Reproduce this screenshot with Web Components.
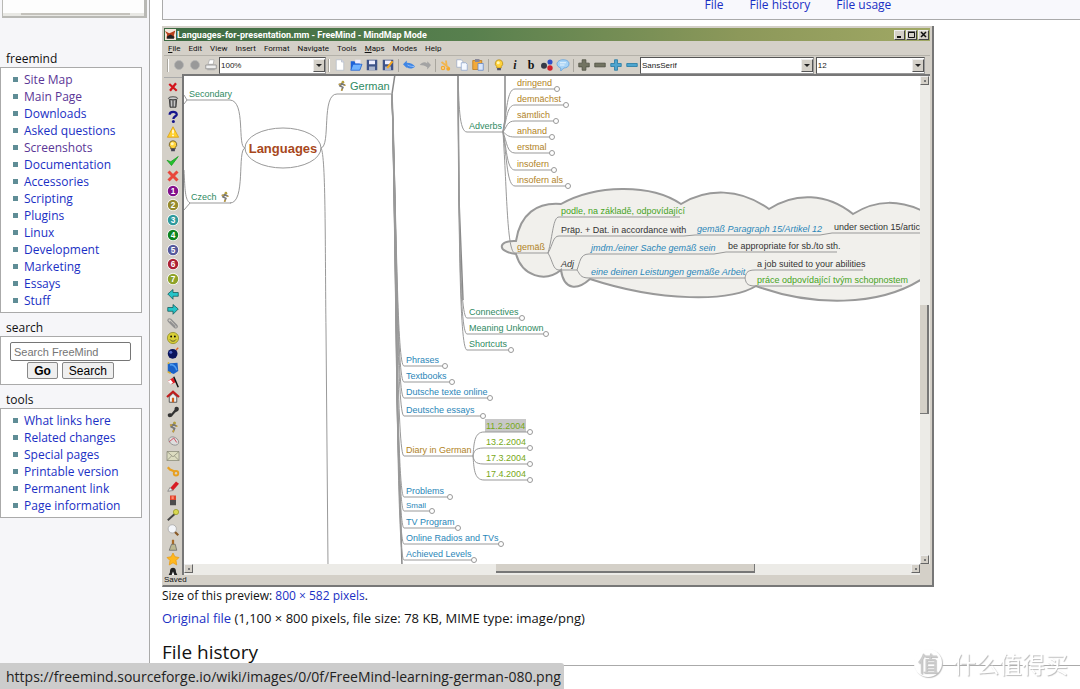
<!DOCTYPE html>
<html lang="en">
<head>
<meta charset="utf-8">
<title>File:FreeMind-learning-german-080.png - FreeMind</title>
<style>
html, body { margin: 0; height: 100%; }
body { font: 12px/17px "Open Sans", "Noto Sans", sans-serif; color: #111; background: #f6f6f9; overflow: hidden; }
</style>
</head>
<body>
<wiki-page>
  <side-logo slot="side"></side-logo>
  <side-box slot="side" heading="freemind">
    <link-list items="Site Map*|Main Page*|Downloads|Asked questions|Screenshots*|Documentation|Accessories|Scripting|Plugins|Linux|Development|Marketing|Essays|Stuff"></link-list>
  </side-box>
  <side-box slot="side" heading="search"><search-form></search-form></side-box>
  <side-box slot="side" heading="tools">
    <link-list items="What links here|Related changes|Special pages|Printable version|Permanent link|Page information"></link-list>
  </side-box>
  <file-toc></file-toc>
  <freemind-window></freemind-window>
  <file-caption></file-caption>
  <section-heading>File history</section-heading>
</wiki-page>
<site-watermark></site-watermark>
<link-status>https://freemind.sourceforge.io/wiki/images/0/0f/FreeMind-learning-german-080.png</link-status>

<script>
const define = (name, html, setup) => customElements.define(name, class extends HTMLElement {
  constructor() {
    super();
    this.attachShadow({ mode: 'open' });
  }
  connectedCallback() {
    this.shadowRoot.innerHTML = typeof html === 'function' ? html(this) : html;
    if (setup) setup(this, this.shadowRoot);
  }
});

/* Icons, drawn on a 16 x 16 grid */
const badge = (n, c) => `<circle cx="8" cy="8" r="8" fill="#fff"/><circle cx="8" cy="8" r="7" fill="${c}"/><text x="8" y="12" text-anchor="middle" font-family="Liberation Sans, sans-serif" font-weight="bold" font-size="11" fill="#fff">${n}</text>`;
const runner = '<circle cx="10" cy="2.5" r="2" fill="#b5a03c"/><path d="M9 4 6 8l4 2-2 5M4 6l5-1 4 2" fill="none" stroke="#777" stroke-width="2.4"/><path d="M4 6l3-1M8 15l1-3M12 7h2" stroke="#c8a23a" stroke-width="2"/>';
const bulb = '<path d="M8 1a5 5 0 0 0-3 9v2h6v-2a5 5 0 0 0-3-9z" fill="#ffd23a" stroke="#b58a10"/><circle cx="7" cy="5" r="2" fill="#fff6b8"/><path d="M5.5 12h5v3h-5z" fill="#556"/>';
const icons = {
  ball: '<circle cx="8" cy="8" r="6" fill="#999" stroke="#b5b5b5"/>',
  printer: '<path d="M4 7 6 1h6l-1 6z" fill="#fff" stroke="#aaa"/><path d="M1 8h14v5H1z" fill="#eee" stroke="#888"/><path d="M3 13h10v2H3z" fill="#aaa"/>',
  page: '<path d="M3 1h7l3 3v11H3z" fill="#fff" stroke="#b4bcc8"/><path d="M10 1v3h3" fill="#dde" stroke="#b4bcc8"/>',
  open: '<path d="M1 3h5l1 2h6v9H1z" fill="#1d62d8"/><path d="M7 1h7v5H7z" fill="#eef"/><path d="M4 7h12l-3 8H1z" fill="#6fb2ff" stroke="#1b5cd0"/>',
  save: '<path d="M1 1h14v14H1z" fill="#3d5288"/><path d="M4 2h8v5H4z" fill="#eef"/><path d="M4 10h8v5H4z" fill="#aab4cc"/>',
  saveas: '<path d="M1 1h14v14H1z" fill="#3d5288"/><path d="M4 2h8v5H4z" fill="#eef"/><path d="M4 10h8v5H4z" fill="#aab4cc"/><path d="M6 11 13 2l2 2-7 9z" fill="#f6a821"/>',
  undo: '<path d="M0 7 5 2v3c5 0 9 2 11 5-3 3-7 4-11 1v1z" fill="#3f86e4"/><path d="M6 8c4 2 7 2 9 2" stroke="#a8ccff" fill="none"/>',
  redo: '<path d="M16 8l-5 6v-3C8 9 5 8 1 8c3-4 7-5 10-2V3z" fill="#a3a3a3"/>',
  cut: '<circle cx="4" cy="12" r="3" fill="#f4a82c"/><circle cx="11" cy="13" r="2.6" fill="#f4a82c"/><path d="M2 4l9 7M8 2l1 9" stroke="#f2b54d" stroke-width="2.4"/><circle cx="4" cy="12" r="1" fill="#fff"/>',
  copy: '<path d="M1 1h6l2 2v8H1z" fill="#fff" stroke="#9aa8c4"/><path d="M7 5h6l2 2v8H7z" fill="#f4f8ff" stroke="#8ea4cc"/>',
  paste: '<path d="M1 2h12v12H1z" fill="#f2a93a" stroke="#b9781a"/><path d="M4 0h6v4H4z" fill="#889"/><path d="M8 6h7v9H8z" fill="#d9e6fb" stroke="#5d84c8"/>',
  bulb,
  italic: '<text x="8" y="13" text-anchor="middle" font-family="Liberation Serif, serif" font-style="italic" font-weight="bold" font-size="16" fill="#222">i</text>',
  bold: '<text x="8" y="13" text-anchor="middle" font-family="Liberation Serif, serif" font-weight="bold" font-size="16" fill="#111">b</text>',
  dots: '<circle cx="4" cy="9" r="4" fill="#353a48"/><circle cx="12" cy="4" r="3.4" fill="#3050c8"/><circle cx="12" cy="12" r="3.6" fill="#d0202c"/>',
  bubble: '<path d="M8 1c5 0 8 2 8 5.5S13 12 9 12l-4 4v-4C2 11 0 9 0 6.500S3 1 8 1z" fill="#a7d3f6" stroke="#5a9edc"/><path d="M4 5h8M4 8h6" stroke="#fff"/>',
  plus: '<path d="M5.500 1h5v4.500H15v5h-4.500V15h-5v-4.500H1v-5h4.500z" fill="#737462" stroke="#4c4d40"/>',
  minus: '<path d="M1 5.500h14v5H1z" fill="#737462" stroke="#4c4d40"/>',
  bplus: '<path d="M6 1h4v5h5v4h-5v5H6v-5H1V6h5z" fill="#4da5cf" stroke="#1f75a0"/>',
  bminus: '<path d="M1 6h14v4H1z" fill="#4da5cf" stroke="#1f75a0"/>',
  remove: '<path d="M3 4l10 9M12 3 4 13" stroke="#d3141c" stroke-width="3"/>',
  trash: '<path d="M3 3h10l-1 12H4z" fill="#777" stroke="#222"/><ellipse cx="8" cy="3" rx="6" ry="2" fill="#ccc" stroke="#222"/><path d="M6 6v8M10 6v8" stroke="#ddd"/>',
  help: '<path d="M3.500 5c0-5 9.500-5 9.500-.5C13 7 8.500 7 8.500 10.500" fill="none" stroke="#15158c" stroke-width="3"/><circle cx="8.500" cy="14" r="2" fill="#15158c"/>',
  warn: '<path d="M8 1 15.500 15H.5z" fill="#ffd12e" stroke="#d69a10"/><path d="M8 5v5M8 11.500v2" stroke="#fff" stroke-width="2"/>',
  idea: '<path d="M8 1a5 5 0 0 0-3 9v2h6v-2a5 5 0 0 0-3-9z" fill="#ffd23a" stroke="#554410"/><circle cx="7" cy="5" r="2" fill="#fff6b8"/><path d="M5.500 11h5v4h-5z" fill="#445"/>',
  ok: '<path d="M0 7l5 2 10-7L6 14z" fill="#23c42c" stroke="#169a20"/>',
  cancel: '<path d="M2 2l12 12M14 2 2 14" stroke="#e8463c" stroke-width="4"/>',
  n1: badge(1, '#82108c'), n2: badge(2, '#968a2c'), n3: badge(3, '#2f9a9c'), n4: badge(4, '#0c8420'),
  n5: badge(5, '#55599c'), n6: badge(6, '#ac2034'), n7: badge(7, '#8ea228'),
  back: '<path d="M1 8l7-6v4h7v5H8v4z" fill="#25c4c8" stroke="#155"/>',
  forward: '<path d="M15 8 8 2v4H1v5h7v4z" fill="#25c4c8" stroke="#155"/>',
  clip: '<path d="M14 13 5 3C2 1 0 4 2 6l8 8c3 2 5-1 3-3L6 4M4 6l7 7" fill="none" stroke="#909090" stroke-width="1.500"/>',
  smile: '<circle cx="8" cy="8" r="7.500" fill="#d8cf38" stroke="#8f8920"/><circle cx="5.500" cy="6" r="1.200"/><circle cx="10.500" cy="6" r="1.200"/><path d="M4 10c2 3 6 3 8 0" fill="none" stroke="#333"/>',
  bomb: '<circle cx="7.500" cy="9" r="6.500" fill="#0a145c"/><circle cx="5" cy="7" r="2" fill="#5068c8"/><path d="M12 4l3-3" stroke="#e06828" stroke-width="2"/>',
  globe: '<path d="M1 2l13-1 1 11-6 4-8-3z" fill="#1a62c8"/><path d="M4 4c4-1 8 2 9 7" stroke="#50a0f4" stroke-width="2" fill="none"/><path d="M1 13l4 2M1 1l2 1" stroke="#d8b030" stroke-width="2"/>',
  flag: '<path d="M1 7 8 2l4 6-6 3z" fill="#e01e24"/><path d="M1 7l4 4 3-2-3-4z" fill="#fff"/><path d="M9 1l6 14" stroke="#111" stroke-width="2"/>',
  home: '<path d="M3 8v7h10V8L8 3z" fill="#eee" stroke="#333"/><path d="M0 8l8-7 8 7" fill="none" stroke="#c01c1c" stroke-width="3"/><path d="M6.500 9h3v6h-3z" fill="#d06018"/>',
  phone: '<path d="M1 12c0 4 5 4 7 0 2-2 3-4 6-5 3-2 2-6-1-6s-3 2-3 4L6 10c-3-1-5 0-5 2z" fill="#333"/>',
  runner,
  mouse: '<ellipse cx="9" cy="8" rx="7" ry="5" transform="rotate(30 9 8)" fill="#ddd" stroke="#888"/><path d="M3 9l6-5M9 4l4 6" stroke="#c8283c" fill="none"/>',
  mail: '<path d="M0 2h16v12H0z" fill="#dcdcc0" stroke="#8a8a78"/><path d="M0 2l8 7 8-7M0 14l6-6M16 14l-6-6" fill="none" stroke="#8a8a78"/>',
  key: '<path d="M1 3l3 3 7 3" fill="none" stroke="#e8a020" stroke-width="3"/><circle cx="12" cy="11" r="3" fill="none" stroke="#e8a020" stroke-width="2.500"/>',
  pencil: '<path d="M4 11 12 2l4 3-8 9z" fill="#d81c24"/><path d="M1 15l3-5 4 4z" fill="#eee" stroke="#777"/>',
  lamp: '<path d="M4 2h8v6H4z" fill="#e0442c"/><path d="M4 8h8v7H4z" fill="#4c4c4c"/><path d="M6 3h3v4H6z" fill="#ff8a70"/>',
  wand: '<path d="M1 15 11 6" stroke="#444" stroke-width="2.500"/><circle cx="12" cy="4" r="3.500" fill="#d8d850" stroke="#98982c"/>',
  search: '<path d="M10 10l5 5" stroke="#8a5a28" stroke-width="3"/><circle cx="7" cy="6.500" r="5.500" fill="#f4f6fa" stroke="#a4a4a4"/>',
  broom: '<path d="M8 1v7" stroke="#a86c28" stroke-width="3"/><path d="M6 7h5l2 8H3z" fill="#bcb890" stroke="#666"/>',
  star: '<path d="M8 0l2.500 5 5.500 1-4 4 1 6-5-3-5 3 1-6-4-4 5.500-1z" fill="#ffb81e" stroke="#e89a10"/>',
  tux: '<path d="M8 1c-4 0-4 4-4 6l-3 6h14l-3-6c0-2 0-6-4-6z" fill="#222"/><path d="M8 6l-3 8h6z" fill="#fff"/>',
  app: '<path d="M0 0h16v16H0z" fill="#f4e8dc"/><path d="M0 3l6 3 3-1 6-3-2 7 1 4-6-3-6 4 1-6z" fill="#b8401c"/><path d="M3 11l5-3 5 3v3H3z" fill="#222"/>'
};

define('glyph-icon', el => `<style>
  :host { display: block; width: var(--icon, 12px); height: var(--icon, 12px); }
  svg { display: block; width: 100%; height: 100%; overflow: visible; }
</style><svg viewBox="0 0 16 16" aria-hidden="true">${icons[el.getAttribute('name')]}</svg>`);

define('wiki-page', `<style>
  :host { display: grid; grid-template-columns: 149px minmax(0, 1fr); min-height: 100%; }
  main { background: #fff; border-left: 1px solid #aaa; padding-left: 12px; }
</style>
<aside><slot name="side"></slot></aside><main><slot></slot></main>`);

define('side-logo', `<style>
  :host { display: block; box-sizing: border-box; height: 18px; margin: 0 2px 32px; background: #fdfdfd;
    border: solid #b9b9b5; border-width: 0 3px 2px 1px; padding-top: 13px; }
  div { height: 3px; background: #e8e8e4; padding: 0 14px 0 18px; }
  i { display: block; height: 2px; background: #c4c2bc; }
</style><div><i></i></div>`);

define('side-box', el => `<style>
  :host { display: block; margin: 0 7px 6px 0; }
  h2 { margin: 0; padding-left: 6px; font-size: 12px; font-weight: normal; line-height: 17px; }
  div { background: #fff; border: 1px solid #aaa; padding: 3px 0; }
</style><h2>${el.getAttribute('heading')}</h2><div><slot></slot></div>`);

define('link-list', el => `<style>
  ul { margin: 0; padding: 0; list-style: none; }
  li { display: flex; align-items: center; gap: 6px; padding-left: 12px; height: 17px; }
  li::before { content: ""; width: 5px; height: 5px; background: #5f8d96; }
  a { color: #1a2fc4; text-decoration: none; }
  a.seen { color: #5a3696; }
</style><ul>${el.getAttribute('items').split('|').map(t =>
  `<li><a href="#"${t.endsWith('*') ? ' class="seen"' : ''}>${t.replace('*', '')}</a></li>`).join('')}</ul>`);

define('search-form', `<style>
  form { display: grid; justify-items: center; gap: 1px; padding: 2px 1px 2px 0; }
  input { box-sizing: border-box; width: 121px; height: 19px; border: 1px solid #767676; border-radius: 2px; padding: 0 3px; font: 11px "Liberation Sans", sans-serif; }
  input::placeholder { color: #757575; }
  div { display: flex; gap: 4px; }
  button { height: 17px; padding: 0 6px; border: 1px solid #888; border-radius: 2px; background: #efefef; color: #000; font: 12px "Liberation Sans", sans-serif; }
  button.go { font-weight: bold; }
</style>
<form><input type="search" aria-label="Search FreeMind" placeholder="Search FreeMind"><div><button type="button" class="go">Go</button><button type="button">Search</button></div></form>`);

define('file-toc', `<style>
  :host { display: block; }
  nav { box-sizing: border-box; height: 20px; display: flex; gap: 26px; padding-left: 59%; border: solid #aaa; border-width: 0 0 1px 1px; background: #f8f8fc; line-height: 10px; }
  a { color: #1a2fc4; text-decoration: none; }
</style><nav><a href="#file">File</a><a href="#history">File history</a><a href="#usage">File usage</a></nav>`);

define('combo-box', el => `<style>
  :host { display: block; position: relative; height: 17px; }
  select { appearance: none; box-sizing: border-box; width: 100%; height: 100%; display: block; margin: 0; padding: 0 14px 0 1px; border: 1px solid; border-color: #555 #999 #999 #555; border-radius: 0; background: #fff; color: #222; font: 8px "Liberation Sans", sans-serif; }
  span { position: absolute; right: 1px; top: 2px; bottom: 2px; width: 12px; box-sizing: border-box; background: #d4d0c8; border: 1px solid; border-color: #eee #555 #555 #eee; display: grid; place-items: center; pointer-events: none; }
  span::before { content: ""; border: 3px solid transparent; border-top-color: #222; border-bottom: 0; }
</style><select aria-label="${el.getAttribute('label')}"><option>${el.getAttribute('value')}</option></select><span></span>`);

define('window-title', `<style>
  :host { display: flex; align-items: center; height: 13px; gap: 1px; padding: 0 1px; background: linear-gradient(90deg, #3c6a42, #58804e 40%, #8c985a 75%, #a0a864); color: #fff; font: bold 9px Roboto, sans-serif; --icon: 11px; }
  h1 { flex: 1; margin: 0; font: inherit; white-space: nowrap; }
  button { width: 11px; height: 10px; padding: 0; border: 1px solid; border-color: #eee #444 #444 #eee; background: #d4d0c8; display: grid; place-items: center; }
  svg { width: 7px; height: 7px; display: block; fill: none; stroke: #111; }
</style><glyph-icon name="app"></glyph-icon><h1><slot></slot></h1>
<button type="button" aria-label="Minimize"><svg viewBox="0 0 7 7"><path d="M1 6h4" stroke-width="2"/></svg></button>
<button type="button" aria-label="Maximize"><svg viewBox="0 0 7 7"><path d="M.5 1.500h6v5h-6zM0 1h7"/></svg></button>
<button type="button" aria-label="Close"><svg viewBox="0 0 7 7"><path d="M1 1l5 5M6 1 1 6" stroke-width="1.500"/></svg></button>`);

define('window-menu', `<style>
  :host { display: flex; gap: 8px; height: 14px; padding-left: 4px; border-bottom: 1px solid #b4b1a9; }
  button { padding: 0; border: 0; background: none; color: #111; font: 8px Roboto, sans-serif; }
</style>${['<u>F</u>ile', 'Edit', 'View', 'Insert', 'Format', 'Navigate', 'Tools', '<u>M</u>aps', 'Modes', 'Help'].map(t => `<button type="button">${t}</button>`).join('')}`);

define('window-toolbar', () => {
  const btn = n => `<button type="button" aria-label="${n}"><glyph-icon name="${n}"></glyph-icon></button>`;
  const row = s => s.split(' ').map(n => n === '|' ? '<i></i>' : btn(n)).join('');
  return `<style>
  :host { display: flex; align-items: center; height: 18px; padding: 0 5px 0 1px; --icon: 12px; }
  button { flex: 0 0 16px; height: 16px; padding: 0; border: 0; background: none; display: grid; place-items: center; }
  i { flex: 0 0 1px; height: 13px; margin: 0 2px; background: #a9a69e; }
  i.grip { border-right: 1px solid #fff; }
  .zoom { flex: 0 0 107px; }
  .font { flex: 175 1 0; margin-right: 2px; }
  .size { flex: 110 1 0; }
</style><i class="grip"></i>${row('ball ball printer')}<combo-box class="zoom" label="Zoom" value="100%"></combo-box><i class="grip"></i>${row('page open save saveas | undo redo | cut copy paste | bulb italic bold dots bubble | plus minus bplus bminus')}<combo-box class="font" label="Font" value="SansSerif"></combo-box><combo-box class="size" label="Font size" value="12"></combo-box>`;
});

define('icon-rail', () => {
  const btn = n => `<button type="button" aria-label="${n}"><glyph-icon name="${n}"></glyph-icon></button>`;
  return `<style>
  :host { display: flex; flex-direction: column; overflow: hidden; border-top: 1px solid #aaa; box-sizing: border-box; margin-top: 3px; }
  div { flex: 1; display: flex; flex-direction: column; padding-top: 2px; }
  button { flex: 1 1 0; width: 100%; padding: 0; border: 0; background: none; display: grid; place-items: center; min-height: 0; }
  button.last { flex: 0 0 8px; overflow: hidden; place-items: start center; }
</style><div>${'remove trash help warn idea ok cancel n1 n2 n3 n4 n5 n6 n7 back forward clip smile bomb globe flag home phone runner mouse mail key pencil lamp wand search broom star'.split(' ').map(btn).join('')}</div><button type="button" class="last" aria-label="tux"><glyph-icon name="tux"></glyph-icon></button>`;
});

define('scroll-bar', el => {
  const v = el.hasAttribute('vertical');
  const [a, t, b] = el.getAttribute('parts').split(' ');
  return `<style>
  :host { display: flex; flex-direction: ${v ? 'column' : 'row'}; background: #ecebe7; ${v ? 'padding-right: 1px' : 'padding-bottom: 2px'}; }
  button { flex: 0 0 9px; padding: 0; border: 1px solid; border-color: #eee #666 #666 #eee; background: #d4d0c8; display: grid; place-items: center; }
  button::before { content: ""; width: 2px; height: 2px; background: #777; }
  .a { flex: ${a} 1 0; } .b { flex: ${b} 1 0; }
  .t { flex: ${t} 1 0; background: #d4d0c8; border: solid #777; border-width: ${v ? '0 2px 1px 0' : '0 1px 2px 0'}; }
</style><button type="button" aria-label="Scroll back"></button><span class="a"></span><span class="t"></span><span class="b"></span><button type="button" aria-label="Scroll forward"></button>`;
});

/* The map: nodes are [x, line y, text, colour, line end, options] */
define('mind-map', () => {
  const G = '#2f8a62', O = '#b0821e', B = '#2a86b8', L = '#78a818', N = '#46a31c', K = '#333';
  const nodes = [
    [189, 100, 'Secondary', G, 230], [191, 203, 'Czech', G, 231],
    [469, 132, 'Adverbs', G, 503],
    [517, 89, 'dringend', O, 557, 'c'], [517, 105, 'demnächst', O, 566, 'c'], [517, 121, 'sämtlich', O, 556, 'c'],
    [517, 137, 'anhand', O, 552, 'c'], [517, 153, 'erstmal', O, 552, 'c'], [517, 170, 'insofern', O, 554, 'c'],
    [517, 186, 'insofern als', O, 568, 'c'], [517, 253, 'gemäß', O, 548],
    [469, 318, 'Connectives', G, 522, 'c'], [469, 334, 'Meaning Unknown', G, 546, 'c'], [469, 350, 'Shortcuts', G, 511, 'c'],
    [406, 366, 'Phrases', B, 445, 'c'], [406, 382, 'Textbooks', B, 452, 'c'], [406, 398, 'Dutsche texte online', B, 490, 'c'],
    [406, 416, 'Deutsche essays', B, 483, 'c'], [406, 456, 'Diary in German', O, 473],
    [406, 497, 'Problems', B, 450, 'c'], [406, 511, 'Small', B, 432, 'cs'], [406, 528, 'TV Program', B, 458, 'c'],
    [406, 544, 'Online Radios and TVs', B, 501, 'c'], [406, 560, 'Achieved Levels', B, 474, 'c'],
    [486, 432, '11.2.2004', L, 530, 'c'], [486, 448, '13.2.2004', L, 530, 'c'], [486, 464, '17.3.2004', L, 530, 'c'], [486, 480, '17.4.2004', L, 530, 'c'],
    [561, 217, 'podle, na základě, odpovídající', N, 680], [561, 236, 'Präp. + Dat. in accordance with', K, 684],
    [561, 270, 'Adj', K, 577, 'i'], [697, 235, 'gemäß Paragraph 15/Artikel 12', B, 820, 'i'],
    [834, 233, 'under section 15/article', K, 940], [591, 254, 'jmdm./einer Sache gemäß sein', B, 714, 'i'],
    [728, 252, 'be appropriate for sb./to sth.', K, 837], [591, 278, 'eine deinen Leistungen gemäße Arbeit', B, 745, 'i'],
    [757, 270, 'a job suited to your abilities', K, 863], [757, 286, 'práce odpovídající tvým schopnostem', N, 902]
  ];
  const node = ([x, y, t, c, e, o = '']) =>
    `<path d="M${x - 2} ${y}H${o.includes('c') ? e - 2 : e}"/>` +
    (o.includes('c') ? `<circle cx="${e}" cy="${y}" r="2.500" fill="#fff"/>` : '') +
    `<text x="${x}" y="${y - 3}" fill="${c}"${o.includes('i') ? ' font-style="italic"' : ''}${o.includes('s') ? ' font-size="8"' : ''}>${t}</text>`;
  const fan = (x, y, cx, tx, ys) => ys.map(v => `<path d="M${x} ${y}C${cx} ${(y + v) / 2} ${cx} ${v} ${tx} ${v}"/>`).join('');
  return `<style>
  :host { display: block; background: #fff; }
  .map { display: block; width: 100%; height: 488px; font: 9px "Liberation Sans", sans-serif; }
  g { fill: none; stroke: #999; stroke-width: 1; }
  .figure { stroke: initial; }
  text { stroke: none; }
</style><svg class="map" viewBox="184 76 737 488" preserveAspectRatio="xMinYMin slice" role="img" aria-label="Mind map of languages"><g>
  <path stroke="#999" stroke-width="2" fill="#f1f0ec" d="M516 241C520 214 537 202 561 204C595 185 650 183 681 204C707 188 740 188 769 209C795 192 827 193 853 214C877 199 900 200 925 212V277C880 308 810 306 756 286C730 302 660 302 590 279C578 290 564 291 561 270C545 283 522 276 516 254C497 252 497 240 516 241Z"/>
  <rect x="485" y="419" width="41" height="13" fill="#c8c8c8" stroke="none"/>
  <ellipse cx="283" cy="148" rx="38" ry="20" fill="#fff"/>
  <path d="M230 100C246 101 237 147 245 148C237 150 246 203 230 203M184 95 187 100 184 104M184 170C185 190 185 200 190 203L184 210M321 148C331 146 321 94 337 94H391M321 148C326 155 325 250 326 330L328 566"/>
  <path stroke-width="1.500" stroke="#888" d="M395 74 392 94C396 200 396 280 397 400L402 566M505 74V120L503 132M458 74 459 200 463 300"/>
  ${fan(392, 94, 397, 404, [366, 382, 398, 416, 456, 497, 511, 528, 544, 560])}
  ${fan(458, 74, 459, 467, [132, 318, 334, 350])}
  ${fan(503, 132, 507, 515, [89, 105, 121, 137, 153, 170, 186, 253])}
  ${fan(473, 456, 474, 484, [432, 448, 464, 480])}
  ${fan(548, 253, 553, 559, [217, 236, 270])}
  ${fan(577, 270, 580, 589, [254, 278])}
  ${fan(745, 278, 746, 755, [270, 286])}
  <path d="M684 236 695 235M820 235 832 233M714 254 726 252"/>
  ${nodes.map(node).join('')}
  <text x="350" y="90" font-size="11" fill="${G}">German</text>
  <text x="283" y="153" text-anchor="middle" font-size="13" font-weight="bold" fill="#a8481c">Languages</text>
  </g>
  <svg x="336" y="80" width="11" height="12" viewBox="0 0 16 16">${runner}</svg>
  <svg x="219" y="191" width="11" height="12" viewBox="0 0 16 16">${runner}</svg>
</svg>`;
});

define('freemind-window', `<style>
  :host { display: block; box-sizing: border-box; max-width: 772px; margin-top: 6px; padding: 2px 2px 0 1px; background: #d4d0c8; border: solid #777; border-width: 0 2px 2px 1px; border-left-color: #d4d0c8; }
  .work { display: grid; grid-template-columns: 18px minmax(0, 1fr) 10px; grid-template-rows: auto 11px; }
  icon-rail { grid-row: 1 / 3; }
  mind-map, .vert { border-top: 2px solid #777; }
  mind-map, .horiz { border-left: 2px solid #777; }
  footer { height: 10px; font: 8px/9px "Liberation Sans", sans-serif; color: #111; }
</style>
<window-title>Languages-for-presentation.mm - FreeMind - MindMap Mode</window-title>
<window-menu></window-menu><window-toolbar></window-toolbar>
<div class="work"><icon-rail></icon-rail><mind-map></mind-map><scroll-bar class="vert" vertical parts="221 109 142"></scroll-bar><scroll-bar class="horiz" parts="304 259 157"></scroll-bar></div>
<footer>Saved</footer>`);

define('file-caption', `<style>
  p { margin: 0 0 6px; }
  p.meta { font-size: 13px; }
  a { color: #1a2fc4; text-decoration: none; }
</style><p>Size of this preview: <a href="#">800 × 582 pixels</a>.</p><p class="meta"><a href="#">Original file</a> (1,100 × 800 pixels, file size: 78 KB, MIME type: image/png)</p>`);

define('section-heading', `<style>
  h2 { margin: 12px 0 0; border-bottom: 1px solid #aaa; font-size: 19px; line-height: 26px; font-weight: normal; }
</style><h2><slot></slot></h2>`);

define('link-status', `<style>
  :host { position: fixed; left: 0; bottom: 0; box-sizing: border-box; height: 26px; padding: 0 3px 0 6px; border-radius: 0 3px 0 0; background: #ccc; color: #222; font-size: 14px; line-height: 27px; white-space: nowrap; }
</style><slot></slot>`);

define('site-watermark', `<style>
  :host { position: fixed; right: 12px; bottom: 10px; display: flex; align-items: center; gap: 11px; height: 32px; color: #fff; text-shadow: 1px 1px 1px #bbb; font: 23px/32px "Noto Sans CJK SC", sans-serif; }
  b { width: 28px; height: 28px; border-radius: 50%; background: #fff; box-shadow: 1px 1px 1px #bbb; text-align: center; font-weight: normal; font-size: 21px; line-height: 27px; color: #ccc; }
</style><b>值</b><span>什么值得买</span>`);
</script>
</body>
</html>
